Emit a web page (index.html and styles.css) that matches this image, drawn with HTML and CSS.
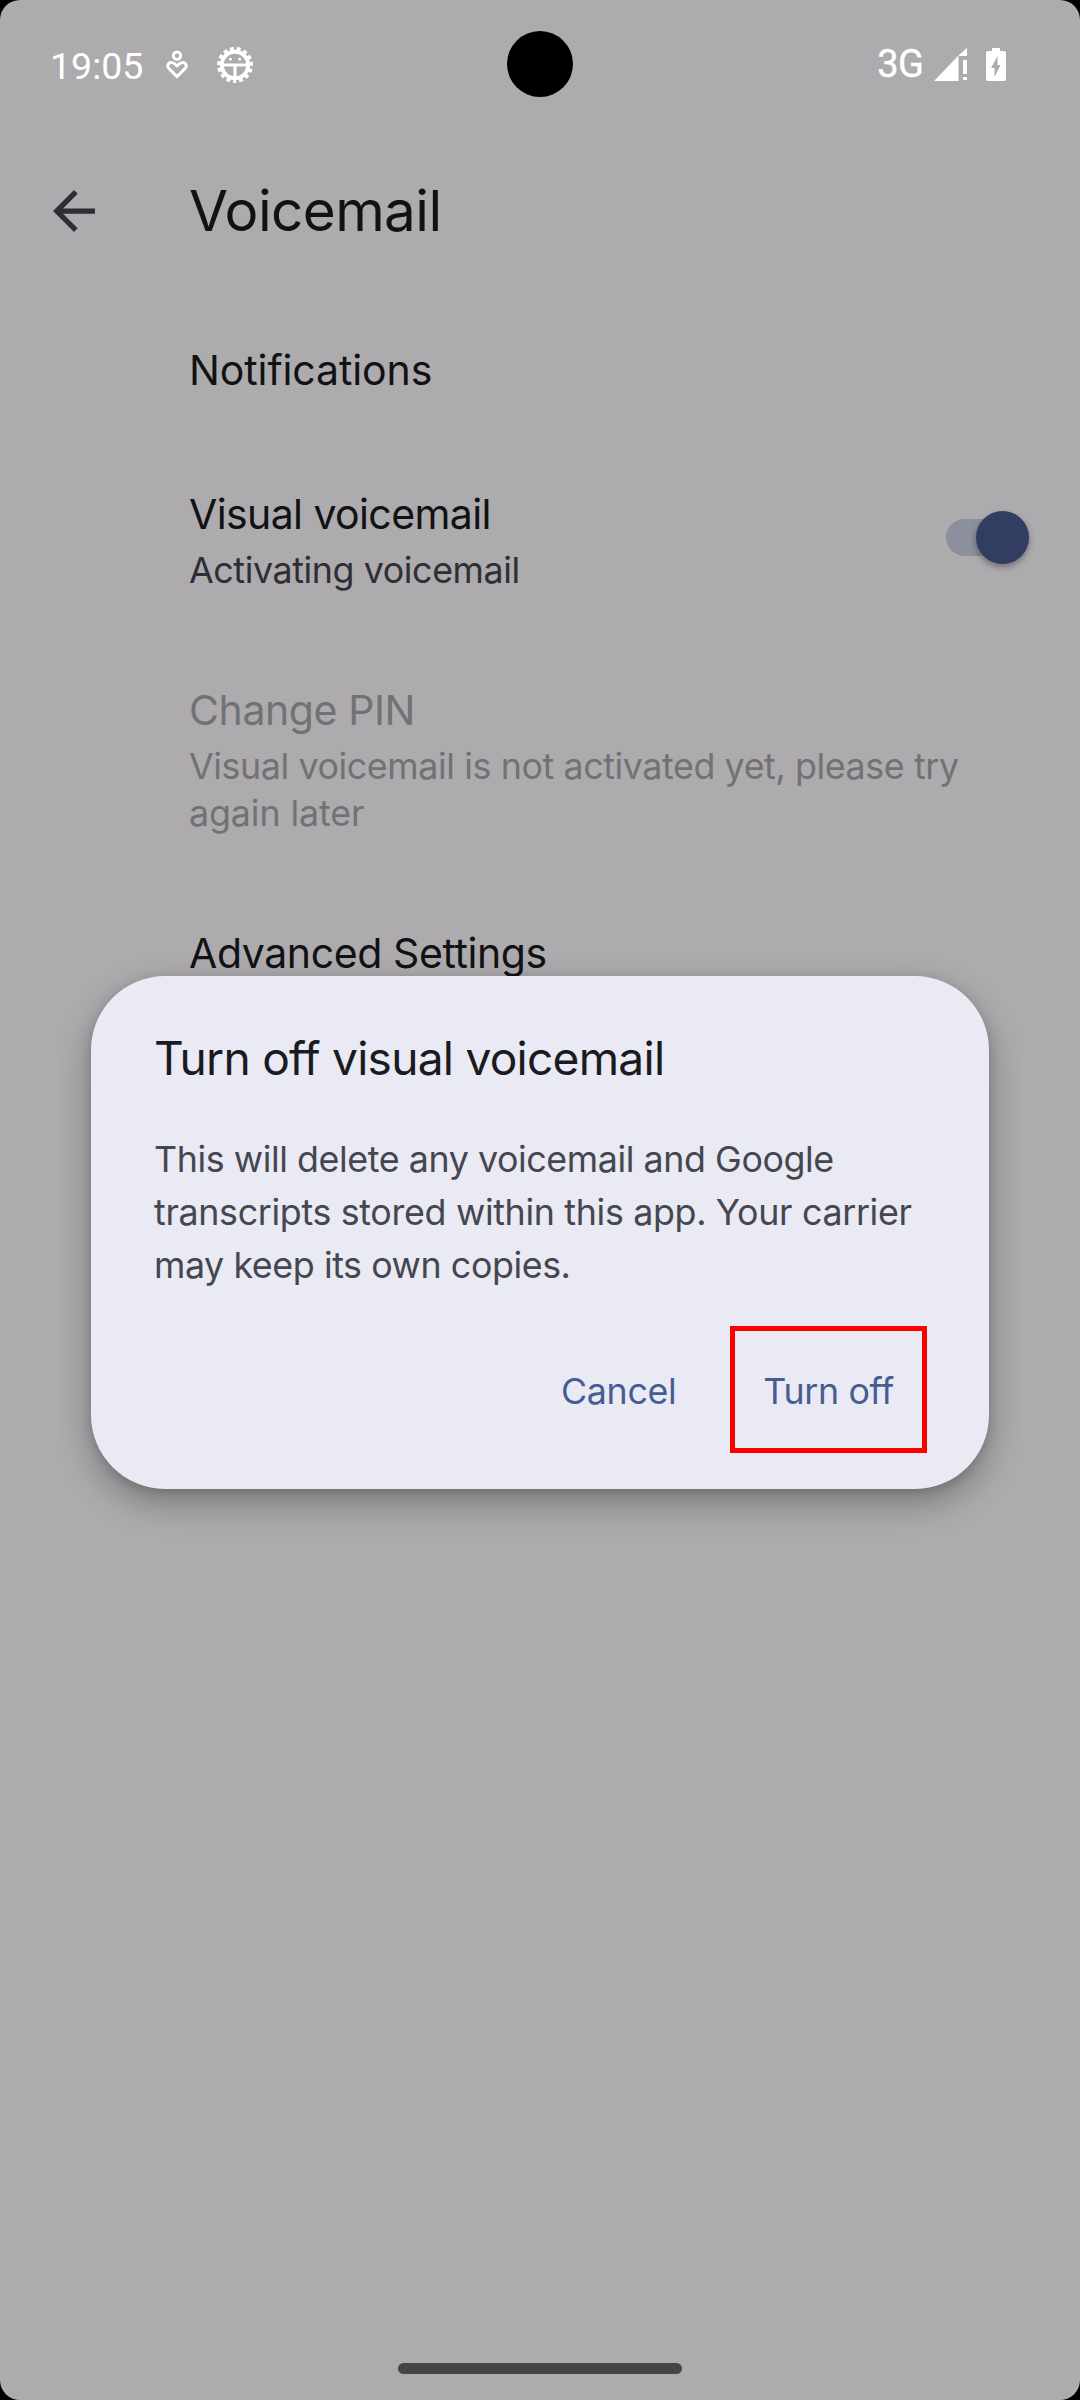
FILE: index.html
```html
<!DOCTYPE html>
<html lang="en">
<head>
<meta charset="utf-8">
<title>Voicemail</title>
<link rel="stylesheet" href="styles.css">
</head>
<body>
<div class="screen">
  <header class="status-bar">
    <div class="status-left">
      <span class="clock">19:05</span>
      <svg class="icon-care" width="22" height="30" viewBox="0 0 22 30" fill="none" stroke="#fff" stroke-width="2.900">
        <circle cx="11" cy="5.700" r="3.700"/>
        <path d="M11 26.600L3.300 18.900C-.2 15.200 3 11.900 6.300 12.600C8.300 13 9.700 14.500 11 16C12.300 14.500 13.700 13 15.700 12.600C19 11.900 22.200 15.200 18.700 18.900Z" stroke-linejoin="round"/>
      </svg>
      <svg class="icon-gear" width="38" height="38" viewBox="-19 -19 38 38" fill="none" stroke="#fff">
        <circle r="13.200" stroke-width="4"/>
        <path d="M-13 0H13M0 0V13" stroke-width="3.200"/>
        <circle r="16.300" stroke-width="3.400" stroke-dasharray="3.900 2.928" stroke-dashoffset="1.950" transform="rotate(90)"/>
        <circle cx="-4.600" cy="-5.800" r="1.400" fill="#fff" stroke="none"/>
        <circle cx="4.600" cy="-5.800" r="1.400" fill="#fff" stroke="none"/>
      </svg>
    </div>
    <div class="status-right">
      <span class="network">3G</span>
      <svg class="icon-signal" width="33" height="33" viewBox="0 0 33 33" fill="#fff">
        <path d="M0 33L24.500 7.500V33ZM25 7L33 0V8H25ZM29 12H33V26H29ZM29 29H33V32H29Z"/>
      </svg>
      <svg class="icon-battery" width="20" height="33" viewBox="0 0 20 33">
        <path d="M6 0H14V3H18Q20 3 20 5V31Q20 33 18 33H2Q0 33 0 31V5Q0 3 2 3H6Z" fill="#fff"/>
        <path d="M11.500 8V17H14.500L8.500 29V20H5Z" fill="#adabad"/>
      </svg>
    </div>
    <div class="camera"></div>
  </header>

  <div class="app-bar">
    <svg class="icon-back" width="42" height="42" viewBox="4 4 16 16" fill="#2d2f35">
      <path d="M20 11H7.830l5.590-5.590L12 4l-8 8 8 8 1.410-1.410L7.830 13H20v-2z"/>
    </svg>
    <h1 class="page-title">Voicemail</h1>
  </div>

  <main class="settings">
    <div class="setting">
      <div class="setting-title">Notifications</div>
    </div>
    <div class="setting with-switch">
      <div>
        <div class="setting-title snug">Visual voicemail</div>
        <div class="setting-summary">Activating voicemail</div>
      </div>
      <div class="switch"><div class="thumb"></div></div>
    </div>
    <div class="setting disabled">
      <div class="setting-title pin">Change PIN</div>
      <div class="setting-summary">Visual voicemail is not activated yet, please try<br><span class="loose">again later</span></div>
    </div>
    <div class="setting">
      <div class="setting-title advanced">Advanced Settings</div>
    </div>
  </main>

  <footer class="nav-bar"><div class="nav-handle"></div></footer>

  <div class="dialog">
    <h2 class="dialog-title">Turn off visual voicemail</h2>
    <p class="dialog-body">This will delete any voicemail and Google<br><span class="loose">transcripts stored within this app. Your carrier</span><br>may keep its own copies.</p>
    <div class="dialog-actions">
      <button class="action">Cancel</button>
      <button class="action highlighted">Turn off</button>
    </div>
  </div>
</div>
</body>
</html>
```
FILE: styles.css
```css
*,
*::after { box-sizing: border-box; }

body {
  margin: 0;
  background: #000;
  font-family: Inter, Roboto, sans-serif;
  color: #111214;
}

.screen {
  position: relative;
  display: flex;
  flex-direction: column;
  width: 1080px;
  height: 2400px;
  background: #adabad;
  border-radius: 20px;
  overflow: hidden;
}

svg { display: block; }

/* Status bar */
.status-bar {
  display: flex;
  flex: none;
  justify-content: space-between;
  height: 128px;
  padding: 0 74px 0 50px;
  color: #fff;
  font-family: Roboto, sans-serif;
}

.status-left,
.status-right {
  display: flex;
  align-items: center;
  height: 128px;
}

.clock {
  width: 116px;
  font-size: 37.5px;
  line-height: 44px;
  margin-top: 3px;
}

.icon-care { margin-top: 1px; }
.icon-gear { margin: 1px 0 0 28px; }

.network {
  font-size: 38px;
  line-height: 44px;
  letter-spacing: -0.8px;
  -webkit-text-stroke: 0.4px #fff;
}

.icon-signal { margin-left: 11px; }
.icon-battery { margin-left: 19px; }

.camera {
  position: absolute;
  left: 507px;
  top: 31px;
  width: 66px;
  height: 66px;
  border-radius: 50%;
  background: #000;
}

/* App bar */
.app-bar {
  display: flex;
  flex: none;
  align-items: center;
  height: 166px;
  padding: 0 53px;
}

.page-title {
  margin: 0 0 0 94px;
  font-size: 56.6px;
  font-weight: 400;
  line-height: 70px;
  letter-spacing: -0.6px;
}

/* Settings list */
.settings {
  display: flex;
  flex: 1;
  flex-direction: column;
  padding: 51px 51px 0 189px;
}

.setting { margin-bottom: 94px; }

.with-switch {
  display: flex;
  align-items: center;
  justify-content: space-between;
  margin-bottom: 91px;
}

.setting-title {
  font-size: 41px;
  line-height: 50px;
  letter-spacing: -0.1px;
}

.setting-title.snug { letter-spacing: -0.6px; }
.setting-title.pin { letter-spacing: -0.4px; }
.setting-title.advanced { letter-spacing: -0.4px; }

.setting-summary {
  margin-top: 8px;
  font-size: 35.8px;
  line-height: 47px;
  letter-spacing: -0.4px;
  color: #2d2f35;
}

.setting-summary .loose { letter-spacing: -0.1px; }

.disabled { margin-bottom: 91px; }
.disabled,
.disabled .setting-summary { color: #727274; }

.switch {
  display: flex;
  align-items: center;
  justify-content: flex-end;
  width: 83px;
  height: 37px;
  margin-bottom: 9px;
  border-radius: 19px;
  background: #8c8f9c;
}

.thumb {
  flex: none;
  width: 53px;
  height: 53px;
  border-radius: 50%;
  background: #313e62;
  box-shadow: 0 3px 6px rgba(0, 0, 0, 0.35);
}

/* Confirmation dialog */
.dialog {
  position: absolute;
  left: 91px;
  top: 976px;
  width: 898px;
  height: 513px;
  padding: 54px 62px 0 63px;
  border-radius: 74px;
  background: #e9eaf3;
  box-shadow: 0 14px 34px rgba(0, 0, 0, 0.3), 0 2px 10px rgba(0, 0, 0, 0.14);
}

.dialog-title {
  margin: 0;
  font-size: 46.1px;
  font-weight: 400;
  line-height: 56px;
  letter-spacing: -0.75px;
  color: #1a1b20;
}

.dialog-body {
  margin: 47px 0 0;
  font-size: 35.8px;
  line-height: 53px;
  letter-spacing: -0.42px;
  color: #45464f;
}

.dialog-body .loose { letter-spacing: -0.33px; }

.dialog-actions {
  display: flex;
  justify-content: flex-end;
  gap: 22px;
  margin-top: 34px;
}

.action {
  position: relative;
  height: 127px;
  padding: 3px 33px 0 32px;
  border: 0;
  background: none;
  font-family: inherit;
  font-size: 35.8px;
  letter-spacing: -0.35px;
  color: #475d92;
}

.highlighted::after {
  content: "";
  position: absolute;
  top: 0;
  right: 0;
  width: 197px;
  height: 127px;
  border: 5px solid #f00;
}

/* Gesture navigation */
.nav-bar {
  display: flex;
  flex: none;
  justify-content: center;
  height: 37px;
}

.nav-handle {
  width: 284px;
  height: 11px;
  border-radius: 6px;
  background: #444;
}
```
